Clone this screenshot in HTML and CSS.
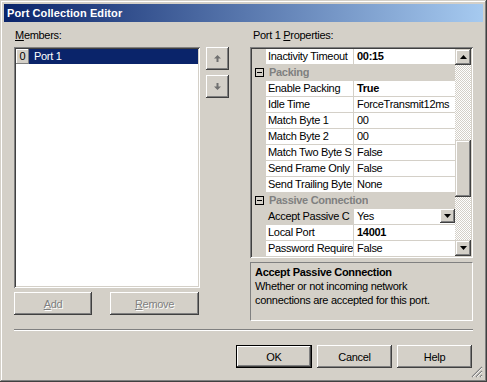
FILE: index.html
```html
<!DOCTYPE html>
<html lang="en">
<head>
    <meta charset="UTF-8">
    <title>Port Collection Editor</title>
    <link rel="stylesheet" href="styles.css">
</head>
<body>
    <div class="window">
        <div class="titlebar">Port Collection Editor</div>

        <div class="content">
            <div class="main">
                <!-- Members list -->
                <div class="members">
                    <div class="label"><u>M</u>embers:</div>
                    <div class="listbox">
                        <div class="list-item">
                            <span class="index">0</span>
                            <span class="item-text">Port 1</span>
                        </div>
                    </div>
                    <div class="list-buttons">
                        <button class="btn disabled btn-add"><u>A</u>dd</button>
                        <button class="btn disabled btn-remove"><u>R</u>emove</button>
                    </div>
                </div>

                <div class="order-buttons">
                    <button class="btn btn-arrow">
                        <svg width="9" height="9" viewBox="0 0 9 9"><path d="M4.5 1 L8 4.5 L5.5 4.5 L5.5 8 L3.5 8 L3.5 4.5 L1 4.5 Z" fill="#707070"/></svg>
                    </button>
                    <button class="btn btn-arrow">
                        <svg width="9" height="9" viewBox="0 0 9 9"><path d="M4.5 8 L8 4.5 L5.5 4.5 L5.5 1 L3.5 1 L3.5 4.5 L1 4.5 Z" fill="#707070"/></svg>
                    </button>
                </div>

                <!-- Property grid -->
                <div class="properties">
                    <div class="label">Port 1 <u>P</u>roperties:</div>
                    <div class="grid">
                        <div class="grid-rows">
                            <div class="row"><span class="gutter"></span><span class="name">Inactivity Timeout</span><span class="value bold">00:15</span></div>
                            <div class="row category"><span class="gutter"><span class="expander"></span></span><span class="name">Packing</span></div>
                            <div class="row"><span class="gutter"></span><span class="name">Enable Packing</span><span class="value bold">True</span></div>
                            <div class="row"><span class="gutter"></span><span class="name">Idle Time</span><span class="value">ForceTransmit12ms</span></div>
                            <div class="row"><span class="gutter"></span><span class="name">Match Byte 1</span><span class="value">00</span></div>
                            <div class="row"><span class="gutter"></span><span class="name">Match Byte 2</span><span class="value">00</span></div>
                            <div class="row"><span class="gutter"></span><span class="name">Match Two Byte S</span><span class="value">False</span></div>
                            <div class="row"><span class="gutter"></span><span class="name">Send Frame Only</span><span class="value">False</span></div>
                            <div class="row"><span class="gutter"></span><span class="name">Send Trailing Byte</span><span class="value">None</span></div>
                            <div class="row category"><span class="gutter"><span class="expander"></span></span><span class="name">Passive Connection</span></div>
                            <div class="row selected"><span class="gutter"></span><span class="name">Accept Passive C</span><span class="value">Yes
                                <span class="dropdown">
                                    <svg width="7" height="4" viewBox="0 0 7 4"><path d="M0 0 H7 L3.5 4 Z" fill="#000"/></svg>
                                </span></span></div>
                            <div class="row"><span class="gutter"></span><span class="name">Local Port</span><span class="value bold">14001</span></div>
                            <div class="row"><span class="gutter"></span><span class="name">Password Require</span><span class="value">False</span></div>
                        </div>
                        <div class="scrollbar">
                            <div class="sb-btn">
                                <svg width="7" height="4" viewBox="0 0 7 4"><path d="M0 4 H7 L3.5 0 Z" fill="#000"/></svg>
                            </div>
                            <div class="sb-track"><div class="sb-thumb"></div></div>
                            <div class="sb-btn">
                                <svg width="7" height="4" viewBox="0 0 7 4"><path d="M0 0 H7 L3.5 4 Z" fill="#000"/></svg>
                            </div>
                        </div>
                    </div>
                    <div class="description">
                        <div class="desc-title">Accept Passive Connection</div>
                        <div class="desc-text">Whether or not incoming network<br>connections are accepted for this port.</div>
                    </div>
                </div>
            </div>

            <div class="separator"></div>

            <div class="dialog-buttons">
                <button class="btn btn-default">OK</button>
                <button class="btn">Cancel</button>
                <button class="btn">Help</button>
            </div>
        </div>

        <svg class="grip" width="12" height="12" viewBox="0 0 12 12">
            <path d="M11 1 L1 11 M11 5 L5 11 M11 9 L9 11" stroke="#808080" stroke-width="1.2"/>
            <path d="M11 2 L2 11 M11 6 L6 11 M11 10 L10 11" stroke="#fff" stroke-width="0.8"/>
        </svg>
    </div>
</body>
</html>
```

FILE: styles.css
```css
body {
    margin: 0;
    font-family: "Liberation Sans", Arial, sans-serif;
    font-size: 11px;
    letter-spacing: -0.3px;
    color: #000;
}

.window {
    position: relative;
    width: 487px;
    height: 382px;
    box-sizing: border-box;
    padding: 4px;
    background-color: #d4d0c8;
    box-shadow: inset -1px -1px #404040, inset 1px 1px #d4d0c8,
                inset -2px -2px #808080, inset 2px 2px #fff;
}

.titlebar {
    height: 18px;
    line-height: 18px;
    padding-left: 3px;
    color: #fff;
    font-weight: bold;
    letter-spacing: 0.1px;
    background: linear-gradient(to right, #0a246a, #a6caf0);
}

.content {
    padding: 7px 10px 0;
}

.main {
    display: flex;
    height: 292px;
}

.label {
    height: 13px;
    line-height: 13px;
    margin-bottom: 5px;
    padding-left: 1px;
}

/* members */
.members {
    width: 186px;
}

.listbox {
    height: 241px;
    box-sizing: border-box;
    padding: 2px;
    background-color: #fff;
    box-shadow: inset 1px 1px #808080, inset -1px -1px #fff,
                inset 2px 2px #404040, inset -2px -2px #d4d0c8;
}

.list-item {
    display: flex;
    height: 15px;
    line-height: 15px;
}

.index {
    width: 13px;
    text-align: center;
    background-color: #d4d0c8;
    box-shadow: inset -1px -1px #808080, inset 1px 1px #fff;
}

.item-text {
    flex: 1;
    padding-left: 5px;
    background-color: #0a246a;
    color: #fff;
}

.btn {
    height: 23px;
    box-sizing: border-box;
    border: none;
    padding: 0;
    background-color: #d4d0c8;
    font: inherit;
    letter-spacing: inherit;
    color: #000;
    display: flex;
    align-items: center;
    justify-content: center;
    box-shadow: inset -1px -1px #404040, inset 1px 1px #fff,
                inset -2px -2px #808080, inset 2px 2px #d4d0c8;
}

.btn.disabled {
    color: #808080;
    text-shadow: 1px 1px #fff;
}

.list-buttons {
    display: flex;
    gap: 18px;
    margin-top: 4px;
}

.btn-add {
    width: 78px;
}

.btn-remove {
    width: 89px;
}

.order-buttons {
    display: flex;
    flex-direction: column;
    gap: 5px;
    margin-left: 6px;
    padding-top: 18px;
}

.btn-arrow {
    width: 23px;
}

/* property grid */
.properties {
    margin-left: auto;
    width: 223px;
}

.properties .label {
    padding-left: 3px;
}

.grid {
    display: flex;
    height: 211px;
    box-sizing: border-box;
    padding: 2px;
    background-color: #fff;
    box-shadow: inset 1px 1px #808080, inset -1px -1px #fff,
                inset 2px 2px #404040, inset -2px -2px #d4d0c8;
}

.grid-rows {
    flex: 1;
    overflow: hidden;
}

.row {
    display: flex;
    height: 16px;
    box-sizing: border-box;
    border-bottom: 1px solid #d4d0c8;
    line-height: 15px;
}

.gutter {
    width: 14px;
    flex-shrink: 0;
    background-color: #d4d0c8;
    display: flex;
    align-items: center;
    justify-content: center;
}

.name {
    width: 88px;
    flex-shrink: 0;
    box-sizing: border-box;
    padding-left: 2px;
    border-right: 1px solid #d4d0c8;
    white-space: nowrap;
    overflow: hidden;
}

.value {
    flex: 1;
    display: flex;
    padding-left: 3px;
    white-space: nowrap;
    overflow: hidden;
}

.bold {
    font-weight: bold;
}

.row.category {
    background-color: #d4d0c8;
    color: #808080;
    font-weight: bold;
}

.row.category .name {
    width: auto;
    border-right: none;
    padding-left: 3px;
}

.expander {
    width: 7px;
    height: 7px;
    border: 1px solid #000;
    background: linear-gradient(#000, #000) center / 5px 1px no-repeat;
}

.row.selected .name {
    background-color: #d4d0c8;
}

.dropdown {
    margin: 0 0 0 auto;
    width: 15px;
    height: 14px;
    display: flex;
    align-items: center;
    justify-content: center;
    background-color: #d4d0c8;
    box-shadow: inset -1px -1px #404040, inset 1px 1px #fff,
                inset -2px -2px #808080, inset 2px 2px #d4d0c8;
}

.scrollbar {
    width: 16px;
    display: flex;
    flex-direction: column;
}

.sb-btn {
    height: 16px;
    display: flex;
    align-items: center;
    justify-content: center;
    background-color: #d4d0c8;
    box-shadow: inset -1px -1px #404040, inset 1px 1px #d4d0c8,
                inset -2px -2px #808080, inset 2px 2px #fff;
}

.sb-track {
    flex: 1;
    background-image: repeating-conic-gradient(#fff 0 25%, #d4d0c8 0 50%);
    background-size: 2px 2px;
}

.sb-thumb {
    margin-top: 75px;
    height: 57px;
    background-color: #d4d0c8;
    box-shadow: inset -1px -1px #404040, inset 1px 1px #d4d0c8,
                inset -2px -2px #808080, inset 2px 2px #fff;
}

.description {
    margin-top: 4px;
    height: 59px;
    box-sizing: border-box;
    padding: 2px 4px;
    border: 1px solid;
    border-color: #808080 #fff #fff #808080;
    line-height: 14px;
}

.desc-title {
    font-weight: bold;
}

/* bottom */
.separator {
    margin-top: 8px;
    border-top: 1px solid #808080;
    border-bottom: 1px solid #fff;
}

.dialog-buttons {
    display: flex;
    justify-content: flex-end;
    gap: 5px;
    margin-top: 14px;
    padding-right: 1px;
}

.dialog-buttons .btn {
    width: 75px;
}

.dialog-buttons .btn-default {
    width: 76px;
    box-shadow: inset 0 0 0 1px #000, inset -2px -2px #404040, inset 2px 2px #fff,
                inset -3px -3px #808080, inset 3px 3px #d4d0c8;
}

.grip {
    position: absolute;
    right: 4px;
    bottom: 4px;
}
```
